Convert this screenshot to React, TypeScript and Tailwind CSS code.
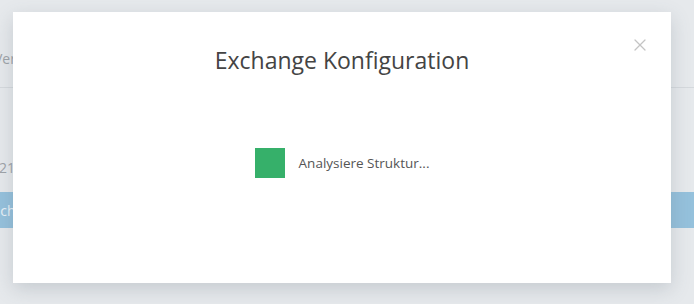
import { X } from "lucide-react";

export default function App() {
  return (
    <div
      className="relative h-[304px] w-[694px] overflow-hidden bg-[#e6e9ec]"
      style={{ fontFamily: '"Open Sans", "Noto Sans", sans-serif' }}
    >
      {/* page behind the overlay */}
      <div className="flex flex-col pt-[48px] text-[#9ea3a8]">
        <div className="flex h-[40px] items-start border-b border-[#d5d9dd] -ml-[6px] text-[14px]">
          <span>Verwaltung</span>
        </div>
        <div className="mt-[70px] -ml-[17px] text-[14px] leading-[20px]">2021</div>
        <div className="mt-[14px] flex h-[36px] items-center bg-[#95c1dc] text-[14px] text-[#e9f2f8]">
          <span className="-ml-[16px]">Suchen</span>
        </div>
      </div>

      {/* modal */}
      <div className="absolute left-[13px] top-[12px] flex h-[271px] w-[658px] flex-col items-center bg-white shadow-[0_6px_18px_rgba(80,95,110,0.22)]">
        <button className="absolute right-[21px] top-[23px] text-[#c4c4c4]">
          <X size={20} strokeWidth={1.5} />
        </button>
        <h1 className="mt-[32px] text-[23px] leading-[32px] text-[#444444]">
          Exchange Konfiguration
        </h1>
        <div className="mt-[72px] flex items-center gap-[14px]">
          <div className="h-[30px] w-[30px] bg-[#36b06a]" />
          <span className="text-[13.5px] text-[#555555]">Analysiere Struktur...</span>
        </div>
      </div>
    </div>
  );
}
